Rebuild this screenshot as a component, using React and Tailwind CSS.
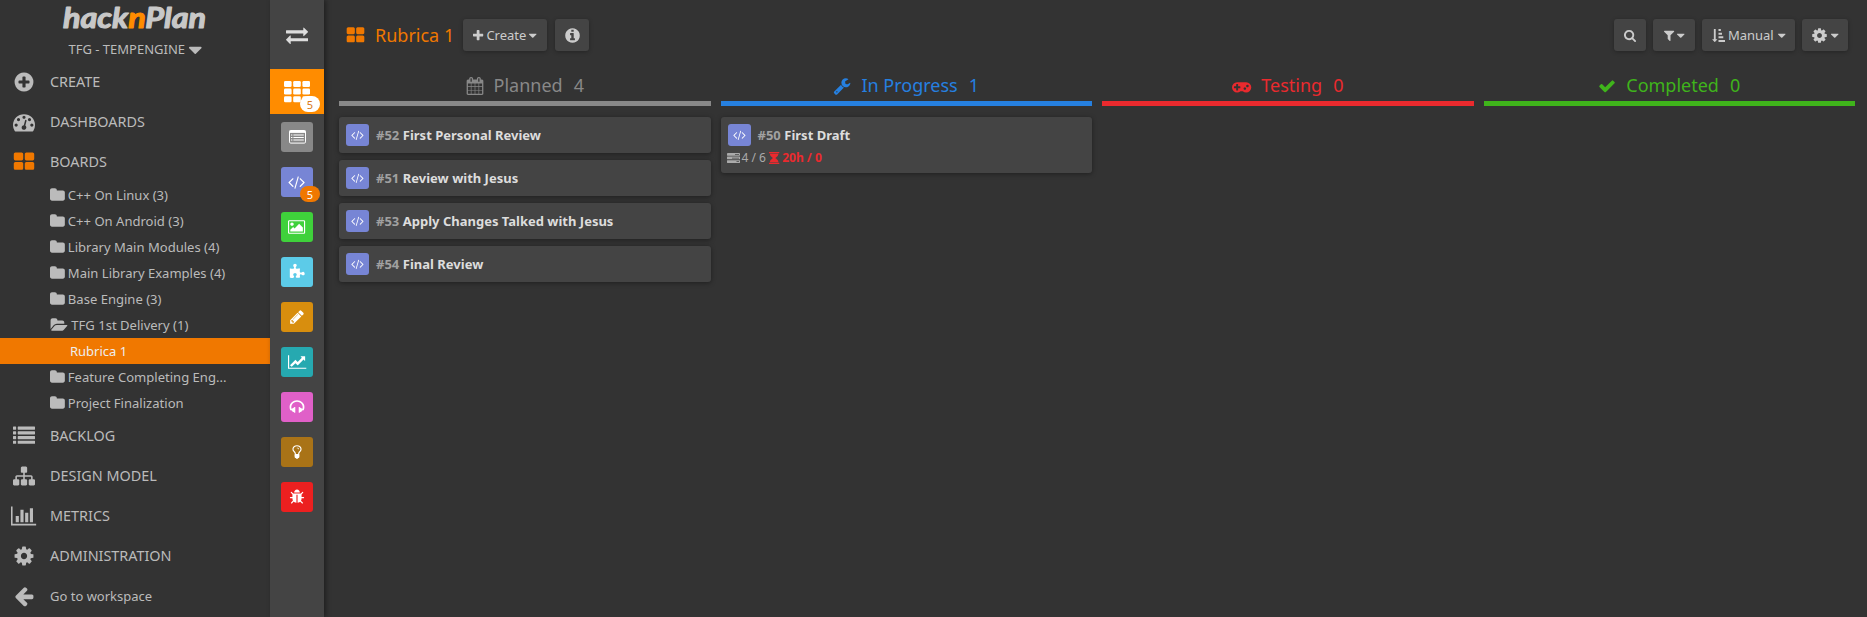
import React from "react";

const ICONS = {
  thLarge: "M832 1024v384q0 52-38 90t-90 38h-512q-52 0-90-38t-38-90v-384q0-52 38-90t90-38h512q52 0 90 38t38 90zm0-768v384q0 52-38 90t-90 38h-512q-52 0-90-38t-38-90v-384q0-52 38-90t90-38h512q52 0 90 38t38 90zm896 768v384q0 52-38 90t-90 38h-512q-52 0-90-38t-38-90v-384q0-52 38-90t90-38h512q52 0 90 38t38 90zm0-768v384q0 52-38 90t-90 38h-512q-52 0-90-38t-38-90v-384q0-52 38-90t90-38h512q52 0 90 38t38 90z",
  plusCircle: "M1344 960v-128q0-26-19-45t-45-19h-256v-256q0-26-19-45t-45-19h-128q-26 0-45 19t-19 45v256h-256q-26 0-45 19t-19 45v128q0 26 19 45t45 19h256v256q0 26 19 45t45 19h128q26 0 45-19t19-45v-256h256q26 0 45-19t19-45zm320-64q0 209-103 385.5t-279.5 279.5-385.5 103-385.5-103-279.5-279.5-103-385.5 103-385.5 279.5-279.5 385.5-103 385.5 103 279.5 279.5 103 385.5z",
  tachometer: "M384 1152q0-53-37.5-90.5t-90.5-37.5-90.5 37.5-37.5 90.5 37.5 90.5 90.5 37.5 90.5-37.5 37.5-90.5zm192-448q0-53-37.5-90.5t-90.5-37.5-90.5 37.5-37.5 90.5 37.5 90.5 90.5 37.5 90.5-37.5 37.5-90.5zm428 481l101-382q6-26-7.5-48.5t-38.5-29.5-48 6.5-30 39.5l-101 382q-60 5-107 43.5t-63 98.5q-20 77 20 146t117 89 146-20 89-117q16-60-6-117t-72-91zm660-33q0-53-37.5-90.5t-90.5-37.5-90.5 37.5-37.5 90.5 37.5 90.5 90.5 37.5 90.5-37.5 37.5-90.5zm-640-640q0-53-37.5-90.5t-90.5-37.5-90.5 37.5-37.5 90.5 37.5 90.5 90.5 37.5 90.5-37.5 37.5-90.5zm448 192q0-53-37.5-90.5t-90.5-37.5-90.5 37.5-37.5 90.5 37.5 90.5 90.5 37.5 90.5-37.5 37.5-90.5zm320 448q0 261-141 483-19 29-54 29h-1402q-35 0-54-29-141-221-141-483 0-182 71-348t191-286 286-191 348-71 348 71 286 191 191 286 71 348z",
  folder: "M1728 608v704q0 92-66 158t-158 66h-1216q-92 0-158-66t-66-158v-960q0-92 66-158t158-66h320q92 0 158 66t66 158v32h672q92 0 158 66t66 158z",
  folderOpen: "M1943 952q0 31-31 66l-336 396q-43 51-120.5 86.5t-143.5 35.5h-1088q-34 0-60.5-13t-26.5-43q0-31 31-66l336-396q43-51 120.5-86.5t143.5-35.5h1088q34 0 60.5 13t26.5 43zm-343-344v160h-832q-94 0-197 47.5t-164 119.5l-337 396-5 6q0-4-.5-12.5t-.5-12.5v-960q0-92 66-158t158-66h320q92 0 158 66t66 158v32h544q92 0 158 66t66 158z",
  caret: "M1408 704q0 26-19 45l-448 448q-19 19-45 19t-45-19l-448-448q-19-19-19-45t19-45 45-19h896q26 0 45 19t19 45z",
  sitemap: "M1792 1248v320q0 40-28 68t-68 28h-320q-40 0-68-28t-28-68v-320q0-40 28-68t68-28h96v-192h-512v192h96q40 0 68 28t28 68v320q0 40-28 68t-68 28h-320q-40 0-68-28t-28-68v-320q0-40 28-68t68-28h96v-192h-512v192h96q40 0 68 28t28 68v320q0 40-28 68t-68 28h-320q-40 0-68-28t-28-68v-320q0-40 28-68t68-28h96v-192q0-52 38-90t90-38h512v-192h-96q-40 0-68-28t-28-68v-320q0-40 28-68t68-28h320q40 0 68 28t28 68v320q0 40-28 68t-68 28h-96v192h512q52 0 90 38t38 90v192h96q40 0 68 28t28 68z",
  barChart: "M640 896v512h-256v-512h256zm384-512v1024h-256v-1024h256zm1024 1152v128h-2048v-1536h128v1408h1920zm-640-896v768h-256v-768h256zm384-384v1152h-256v-1152h256z",
  cog: "M1152 896q0-106-75-181t-181-75-181 75-75 181 75 181 181 75 181-75 75-181zm512-109v222q0 12-8 23t-20 13l-185 28q-19 54-39 91 35 50 107 138 10 12 10 25t-9 23q-27 37-99 108t-94 71q-12 0-26-9l-138-108q-44 23-91 38-16 136-29 186-7 28-36 28h-222q-14 0-24.5-8.5t-11.5-21.5l-28-184q-49-16-90-37l-141 107q-10 9-25 9-14 0-25-11-126-114-165-168-7-10-7-23 0-12 8-23 15-21 51-66.5t54-70.5q-27-50-41-99l-183-27q-13-2-21-12.5t-8-23.5v-222q0-12 8-23t19-13l186-28q14-46 39-92-40-57-107-138-10-12-10-24 0-10 9-23 26-36 98.5-107.5t94.5-71.5q13 0 26 10l138 107q44-23 91-38 16-136 29-186 7-28 36-28h222q14 0 24.5 8.5t11.5 21.5l28 184q49 16 90 37l142-107q9-9 24-9 13 0 25 10 129 119 165 170 7 8 7 22 0 12-8 23-15 21-51 66.5t-54 70.5q26 50 41 98l183 28q13 2 21 12.5t8 23.5z",
  arrowLeft: "M1664 896v128q0 53-32.5 90.5t-84.5 37.5h-704l293 294q38 36 38 90t-38 90l-75 76q-37 37-90 37-52 0-91-37l-651-652q-37-37-37-90 0-52 37-91l651-650q38-38 91-38 52 0 90 38l75 74q38 38 38 91t-38 91l-293 293h704q52 0 84.5 37.5t32.5 90.5z",
  exchange: "M1792 1184v192q0 13-9.5 22.5t-22.5 9.5h-1376v192q0 13-9.5 22.5t-22.5 9.5q-12 0-24-10l-319-320q-9-9-9-22 0-14 9-23l320-320q9-9 23-9 13 0 22.5 9.5t9.5 22.5v192h1376q13 0 22.5 9.5t9.5 22.5zm0-544q0 14-9 23l-320 320q-9 9-23 9-13 0-22.5-9.5t-9.5-22.5v-192h-1376q-13 0-22.5-9.5t-9.5-22.5v-192q0-13 9.5-22.5t22.5-9.5h1376v-192q0-14 9-23t23-9q12 0 24 10l319 319q9 9 9 23z",
  code: "M617 1399l-50 50q-10 10-23 10t-23-10l-466-466q-10-10-10-23t10-23l466-466q10-10 23-10t23 10l50 50q10 10 10 23t-10 23l-393 393 393 393q10 10 10 23t-10 23zm591-1067l-373 1291q-4 13-15.5 19.5t-23.5 2.5l-62-17q-13-4-19.5-15.5t-2.5-24.5l373-1291q4-13 15.5-19.5t23.5-2.5l62 17q13 4 19.5 15.5t2.5 24.5zm657 651l-466 466q-10 10-23 10t-23-10l-50-50q-10-10-10-23t10-23l393-393-393-393q-10-10-10-23t10-23l50-50q10-10 23-10t23 10l466 466q10 10 10 23t-10 23z",
  image: "M576 576q0 80-56 136t-136 56-136-56-56-136 56-136 136-56 136 56 56 136zm1024 384v448h-1408v-192l320-320 160 160 512-512zm96-704h-1600q-13 0-22.5 9.5t-9.5 22.5v1216q0 13 9.5 22.5t22.5 9.5h1600q13 0 22.5-9.5t9.5-22.5v-1216q0-13-9.5-22.5t-22.5-9.5zm160 32v1216q0 66-47 113t-113 47h-1600q-66 0-113-47t-47-113v-1216q0-66 47-113t113-47h1600q66 0 113 47t47 113z",
  puzzle: "M1755 1083q0 81-44.5 135t-123.5 54q-41 0-77.5-17.5t-59-38-56.5-38-71-17.5q-110 0-110 124 0 39 16 115t15 115v5q-22 0-33 1-34 3-97.5 11.5t-115.5 13.5-98 5q-61 0-103-26.5t-42-83.5q0-37 17.5-71t38-56.5 38-59 17.5-77.5q0-79-54-123.5t-135-44.5q-84 0-143 45.5t-59 127.5q0 43 15 83t33.5 64.5 33.5 53 15 50.5q0 45-46 89-37 35-117 35-95 0-245-24-9-2-27.5-4t-27.5-4l-13-2q-1 0-3-1-2 0-2-1v-1024q2 1 17.5 3.5t34 5 21.5 3.5q150 24 245 24 80 0 117-35 46-44 46-89 0-22-15-50.5t-33.5-53-33.5-64.5-15-83q0-82 59-127.5t144-45.5q80 0 134 44.5t54 123.5q0 41-17.5 77.5t-38 59-38 56.5-17.5 71q0 57 42 83.5t103 26.5q64 0 180-15t163-17v2q-1 2-3.5 17.5t-5 34-3.5 21.5q-24 150-24 245 0 80 35 117 44 46 89 46 22 0 50.5-15t53-33.5 64.5-33.5 83-15q82 0 127.5 59t45.5 143z",
  pencil: "M491 1536l91-91-235-235-91 91v107h128v128h107zm523-928q0-22-22-22-10 0-17 7l-542 542q-7 7-7 17 0 22 22 22 10 0 17-7l542-542q7-7 7-17zm-54-192l416 416-832 832h-416v-416zm683 96q0 53-37 90l-166 166-416-416 166-165q36-38 90-38 53 0 91 38l235 234q37 39 37 91z",
  lineChart: "M2048 1536v128h-2048v-1536h128v1408h1920zm-128-1248v435q0 21-19.5 29.5t-35.5-7.5l-121-121-633 633q-10 10-23 10t-23-10l-233-233-416 416-192-192 585-585q10-10 23-10t23 10l233 233 464-464-121-121q-16-16-7.5-35.5t29.5-19.5h435q14 0 23 9t9 23z",
  headphones: "M1728 886q0 166-60 314l-20 49-185 33q-22 83-90.5 136.5t-156.5 53.5v32q0 14-9 23t-23 9h-64q-14 0-23-9t-9-23v-576q0-14 9-23t23-9h64q14 0 23 9t9 23v32q71 0 130 35.5t93 95.5l68-12q29-95 29-193 0-148-88-279t-236.5-209-315.5-78-315.5 78-236.5 209-88 279q0 98 29 193l68 12q34-60 93-95.5t130-35.5v-32q0-14 9-23t23-9h64q14 0 23 9t9 23v576q0 14-9 23t-23 9h-64q-14 0-23-9t-9-23v-32q-88 0-156.5-53.5t-90.5-136.5l-185-33-20-49q-60-148-60-314 0-151 67-291t179-242.5 266-163.5 320-61 320 61 266 163.5 179 242.5 67 291z",
  bulb: "M1120 576q0 13-9.5 22.5t-22.5 9.5-22.5-9.5-9.5-22.5q0-46-54-71t-106-25q-13 0-22.5-9.5t-9.5-22.5 9.5-22.5 22.5-9.5q50 0 99.5 16t87 54 37.5 90zm160 0q0-72-34.5-134t-90-101.5-123-62-136.5-22.5-136.5 22.5-123 62-90 101.5-34.5 134q0 101 68 180 10 11 30.5 33t30.5 33q128 153 141 298h228q13-145 141-298 10-11 30.5-33t30.5-33q68-79 68-180zm128 0q0 155-103 268-45 49-74.5 87t-59.5 95.5-34 107.5q47 28 47 82 0 37-25 64 25 27 25 64 0 52-45 81 13 23 13 47 0 46-31.5 71t-77.5 25q-20 44-60 70t-87 26-87-26-60-70q-46 0-77.5-25t-31.5-71q0-24 13-47-45-29-45-81 0-37 25-64-25-27-25-64 0-54 47-82-4-50-34-107.5t-59.5-95.5-74.5-87q-103-113-103-268 0-99 44.5-184.5t117-142 164-89 186.5-32.5 186.5 32.5 164 89 117 142 44.5 184.5z",
  bug: "M1696 960q0 26-19 45t-45 19h-224q0 171-67 290l208 209q19 19 19 45t-19 45q-18 19-45 19t-45-19l-198-197q-5 5-15 13t-42 28.5-65 36.5-82 29-97 13v-896h-128v896q-51 0-101.5-13.5t-87-33-66-39-43.5-32.5l-15-14-183 207q-20 21-48 21-24 0-43-16-19-18-20.5-44.5t15.5-46.5l202-227q-58-114-58-274h-224q-26 0-45-19t-19-45 19-45 45-19h224v-294l-173-173q-19-19-19-45t19-45 45-19 45 19l173 173h844l173-173q19-19 45-19t45 19 19 45-19 45l-173 173v294h224q26 0 45 19t19 45zm-480-576h-640q0-133 93.5-226.5t226.5-93.5 226.5 93.5 93.5 226.5z",
  plus: "M1600 736v192q0 40-28 68t-68 28h-416v416q0 40-28 68t-68 28h-192q-40 0-68-28t-28-68v-416h-416q-40 0-68-28t-28-68v-192q0-40 28-68t68-28h416v-416q0-40 28-68t68-28h192q40 0 68 28t28 68v416h416q40 0 68 28t28 68z",
  info: "M1152 1376v-160q0-14-9-23t-23-9h-96v-512q0-14-9-23t-23-9h-320q-14 0-23 9t-9 23v160q0 14 9 23t23 9h96v320h-96q-14 0-23 9t-9 23v160q0 14 9 23t23 9h448q14 0 23-9t9-23zm-128-896v-160q0-14-9-23t-23-9h-192q-14 0-23 9t-9 23v160q0 14 9 23t23 9h192q14 0 23-9t9-23zm640 416q0 209-103 385.5t-279.5 279.5-385.5 103-385.5-103-279.5-279.5-103-385.5 103-385.5 279.5-279.5 385.5-103 385.5 103 279.5 279.5 103 385.5z",
  calendar: "M192 1664h288v-288h-288v288zm352 0h320v-288h-320v288zm-352-352h288v-320h-288v320zm352 0h320v-320h-320v320zm-352-384h288v-288h-288v288zm736 736h320v-288h-320v288zm-384-736h320v-288h-320v288zm768 736h288v-288h-288v288zm-384-352h320v-320h-320v320zm-352-864v-288q0-13-9.5-22.5t-22.5-9.5h-64q-13 0-22.5 9.5t-9.5 22.5v288q0 13 9.5 22.5t22.5 9.5h64q13 0 22.5-9.5t9.5-22.5zm736 864h288v-320h-288v320zm-384-384h320v-288h-320v288zm384 0h288v-288h-288v288zm32-480v-288q0-13-9.5-22.5t-22.5-9.5h-64q-13 0-22.5 9.5t-9.5 22.5v288q0 13 9.5 22.5t22.5 9.5h64q13 0 22.5-9.5t9.5-22.5zm384-64v1280q0 52-38 90t-90 38h-1408q-52 0-90-38t-38-90v-1280q0-52 38-90t90-38h128v-96q0-66 47-113t113-47h64q66 0 113 47t47 113v96h384v-96q0-66 47-113t113-47h64q66 0 113 47t47 113v96h128q52 0 90 38t38 90z",
  wrench: "M448 1472q0-26-19-45t-45-19-45 19-19 45 19 45 45 19 45-19 19-45zm644-420l-682 682q-37 37-90 37-52 0-91-37l-106-108q-38-36-38-90 0-53 38-91l681-681q39 98 114.5 173.5t173.5 114.5zm634-435q0 39-23 106-47 134-164.5 217.5t-258.5 83.5q-185 0-316.5-131.5t-131.5-316.5 131.5-316.5 316.5-131.5q58 0 121.5 16.5t107.5 46.5q16 11 16 28t-16 28l-293 169v224l193 107q5-3 79-48.5t135.5-81 70.5-35.5q15 0 23.5 10t8.5 25z",
  gamepad: "M832 1088v-128q0-14-9-23t-23-9h-192v-192q0-14-9-23t-23-9h-128q-14 0-23 9t-9 23v192h-192q-14 0-23 9t-9 23v128q0 14 9 23t23 9h192v192q0 14 9 23t23 9h128q14 0 23-9t9-23v-192h192q14 0 23-9t9-23zm576 64q0-53-37.5-90.5t-90.5-37.5-90.5 37.5-37.5 90.5 37.5 90.5 90.5 37.5 90.5-37.5 37.5-90.5zm256-256q0-53-37.5-90.5t-90.5-37.5-90.5 37.5-37.5 90.5 37.5 90.5 90.5 37.5 90.5-37.5 37.5-90.5zm256 128q0 212-150 362t-362 150q-192 0-338-128h-220q-146 128-338 128-212 0-362-150t-150-362 150-362 362-150h896q212 0 362 150t150 362z",
  check: "M1671 566q0 40-28 68l-724 724-136 136q-28 28-68 28t-68-28l-136-136-362-362q-28-28-28-68t28-68l136-136q28-28 68-28t68 28l294 295 656-657q28-28 68-28t68 28l136 136q28 28 28 68z",
  search: "M1216 832q0-185-131.5-316.5t-316.5-131.5-316.5 131.5-131.5 316.5 131.5 316.5 316.5 131.5 316.5-131.5 131.5-316.5zm512 832q0 52-38 90t-90 38q-54 0-90-38l-343-342q-179 124-399 124-143 0-273.5-55.5t-225-150-150-225-55.5-273.5 55.5-273.5 150-225 225-150 273.5-55.5 273.5 55.5 225 150 150 225 55.5 273.5q0 220-124 399l343 343q37 37 37 90z",
  filter: "M1595 295q17 41-14 70l-493 493v742q0 42-39 59-13 5-25 5-27 0-45-19l-256-256q-19-19-19-45v-486l-493-493q-31-29-14-70 17-39 59-39h1280q42 0 59 39z",
  sortAsc: "M736 1440q0 12-10 24l-319 319q-10 9-23 9-12 0-23-9l-320-320q-15-16-7-35 8-20 30-20h192v-1376q0-14 9-23t23-9h192q14 0 23 9t9 23v1376h192q14 0 23 9t9 23zm160-1440h320v276h-320zm0 500h480v276h-480zm0 500h660v276h-660zm0 500h896v276h-896z",
  list: "M32 1280h192q32 0 32 32v192q0 32-32 32h-192q-32 0-32-32v-192q0-32 32-32zm0-384h192q32 0 32 32v192q0 32-32 32h-192q-32 0-32-32v-192q0-32 32-32zm0-384h192q32 0 32 32v192q0 32-32 32h-192q-32 0-32-32v-192q0-32 32-32zm0-384h192q32 0 32 32v192q0 32-32 32h-192q-32 0-32-32v-192q0-32 32-32zm384 1152h1344q32 0 32 32v192q0 32-32 32h-1344q-32 0-32-32v-192q0-32 32-32zm0-384h1344q32 0 32 32v192q0 32-32 32h-1344q-32 0-32-32v-192q0-32 32-32zm0-384h1344q32 0 32 32v192q0 32-32 32h-1344q-32 0-32-32v-192q0-32 32-32zm0-384h1344q32 0 32 32v192q0 32-32 32h-1344q-32 0-32-32v-192q0-32 32-32z",
  hourglass: "M1632 1600q14 0 23 9t9 23v128q0 14-9 23t-23 9h-1472q-14 0-23-9t-9-23v-128q0-14 9-23t23-9h1472zm-1374-64q3-55 16-107t30-95 46-87 53.5-76 64.5-69.5 66-60 70.5-55 66.5-47.5 65-43q-43-28-65-43t-66.5-47.5-70.5-55-66-60-64.5-69.5-53.5-76-46-87-30-95-16-107h1276q-3 55-16 107t-30 95-46 87-53.5 76-64.5 69.5-66 60-70.5 55-66.5 47.5-65 43q43 28 65 43t66.5 47.5 70.5 55 66 60 64.5 69.5 53.5 76 46 87 30 95 16 107h-1276zm1374-1536q14 0 23 9t9 23v128q0 14-9 23t-23 9h-1472q-14 0-23-9t-9-23v-128q0-14 9-23t23-9h1472z",
};

const VIEW = {
  folderOpen: [0, 2048],
  barChart: [0, 2048],
  lineChart: [0, 2048],
  code: [0, 1920],
  gamepad: [0, 1920],
  image: [-64, 1920],
  caret: [384, 1024],
  search: [64, 1664],
  folder: [64, 1664],
  plus: [192, 1408],
  filter: [192, 1408],
  hourglass: [128, 1536],
};

// Icons are drawn on a 1792-unit em; `size` is the em height in pixels.
function Icon({ name, size, className = "" }) {
  const [x, w] = VIEW[name] || [0, 1792];
  return (
    <svg
      width={(size * w) / 1792}
      height={size}
      viewBox={`${x} 0 ${w} 1792`}
      fill="currentColor"
      className={`shrink-0 overflow-visible ${className}`}
    >
      <path d={ICONS[name]} />
    </svg>
  );
}

function GridIcon() {
  return (
    <svg width="26" height="22" viewBox="0 0 26 22" fill="currentColor">
      {[0, 7.6, 15.2].map((y) =>
        [0, 9.2, 18.4].map((x) => <rect key={x + "-" + y} x={x} y={y} width="7.6" height="6" rx="1.3" />)
      )}
    </svg>
  );
}

function ListAltIcon() {
  return (
    <svg width="17" height="14" viewBox="0 0 17 14" fill="none" stroke="currentColor">
      <rect x="0.5" y="0.5" width="16" height="12.6" rx="1.2" />
      <path d="M0.5 1.7h16" strokeWidth="2.4" />
      <path d="M2 5h1.4M4.4 5h10.4M2 7.5h1.4M4.4 7.5h10.4M2 10h1.4M4.4 10h10.4" strokeWidth="1.2" />
    </svg>
  );
}

function TasksIcon() {
  return (
    <svg width="13" height="10" viewBox="0 0 13 10" fill="currentColor">
      <rect width="13" height="2.7" rx="0.4" />
      <rect y="3.6" width="13" height="2.7" rx="0.4" />
      <rect y="7.2" width="13" height="2.7" rx="0.4" />
      <path d="M8 1.1h4v0.7h-4zM5 4.7h7v0.7h-7zM9.5 8.3h2.5v0.7h-2.5z" fill="#444" />
    </svg>
  );
}

function MenuItem({ icon, label, iconClass = "", textClass = "text-[14.4px]" }) {
  return (
    <div className="flex h-10 items-center">
      <div className={`flex w-[47px] shrink-0 justify-center ${iconClass}`}>
        <Icon name={icon} size={22} />
      </div>
      <span className={`ml-[3px] ${textClass}`}>{label}</span>
    </div>
  );
}

const FOLDERS_TOP = [
  "C++ On Linux (3)",
  "C++ On Android (3)",
  "Library Main Modules (4)",
  "Main Library Examples (4)",
  "Base Engine (3)",
];

function FolderRow({ label, open }) {
  return (
    <div className="flex h-[26px] items-center pl-[50px] text-[13.05px]">
      <Icon name={open ? "folderOpen" : "folder"} size={16} />
      <span className="ml-[3px] pt-px">{label}</span>
    </div>
  );
}

function Sidebar() {
  return (
    <aside className="flex w-[270px] shrink-0 flex-col text-[#bbb]">
      <div className="flex h-[62px] flex-col items-center">
        <svg width="156" height="38" className="shrink-0" fill="#c8c8c8" stroke="#c8c8c8" strokeWidth="1.1" strokeLinejoin="round">
          <text x="6" y="28" textLength="143" lengthAdjust="spacingAndGlyphs" className="font-['Lato'] text-[28px] font-bold italic">
            hack<tspan fill="#ff8c00" stroke="#ff8c00">n</tspan>Plan
          </text>
        </svg>
        <div className="flex h-6 items-center gap-1 text-[13px]">
          <span>TFG - TEMPENGINE</span>
          <Icon name="caret" size={22} />
        </div>
      </div>
      <MenuItem icon="plusCircle" label="CREATE" />
      <MenuItem icon="tachometer" label="DASHBOARDS" />
      <MenuItem icon="thLarge" label="BOARDS" iconClass="text-[#f07800]" />
      {FOLDERS_TOP.map((f) => (
        <FolderRow key={f} label={f} />
      ))}
      <FolderRow label="TFG 1st Delivery (1)" open />
      <div className="flex h-[26px] items-center bg-[#f07800] pt-px pl-[70px] text-[13px] text-[#eee]">Rubrica 1</div>
      <FolderRow label="Feature Completing Eng..." />
      <FolderRow label="Project Finalization" />
      <MenuItem icon="list" label="BACKLOG" />
      <MenuItem icon="sitemap" label="DESIGN MODEL" />
      <MenuItem icon="barChart" label="METRICS" />
      <MenuItem icon="cog" label="ADMINISTRATION" />
      <MenuItem icon="arrowLeft" label="Go to workspace" textClass="text-[13px] pt-px" />
    </aside>
  );
}

function Badge({ className }) {
  return (
    <span className={`absolute flex h-4 w-5 items-center justify-center rounded-[8px] text-[11px] leading-none ${className}`}>
      5
    </span>
  );
}

const CATEGORIES = [
  ["listAlt", "bg-[#888]"],
  ["code", "bg-[#7785d5]"],
  ["image", "bg-[#3fd13b]"],
  ["puzzle", "bg-[#5ccbe8]"],
  ["pencil", "bg-[#d88e0e]"],
  ["lineChart", "bg-[#26a9b0]"],
  ["headphones", "bg-[#e060c8]"],
  ["bulb", "bg-[#a97317]"],
  ["bug", "bg-[#ec2020]"],
];

function CategoryStrip() {
  return (
    <nav className="z-10 flex w-[54px] shrink-0 flex-col items-center bg-[#444] shadow-[2px_0_5px_rgba(0,0,0,0.4)]">
      <div className="flex h-[69px] items-center text-[#ddd]">
        <Icon name="exchange" size={22} />
      </div>
      <div className="relative flex h-[45px] w-full justify-center bg-[#ff8c00] pt-3 text-white">
        <GridIcon />
        <Badge className="top-[27px] left-[30px] bg-white text-[#d97a20]" />
      </div>
      <div className="mt-2 flex flex-col gap-[15px] text-white">
        {CATEGORIES.map(([name, bg]) => (
          <div key={name} className={`relative flex h-[30px] w-8 items-center justify-center rounded-[3px] ${bg}`}>
            {name === "listAlt" ? <ListAltIcon /> : <Icon name={name} size={16} />}
            {name === "code" && <Badge className="top-[19px] left-[19px] bg-[#f07800] text-white" />}
          </div>
        ))}
      </div>
    </nav>
  );
}

function Button({ className, children }) {
  return (
    <button
      className={`flex h-8 items-center justify-center rounded-[3px] bg-[#444] text-[13px] text-[#ccc] shadow-[0_1px_4px_rgba(0,0,0,0.3)] ${className}`}
    >
      {children}
    </button>
  );
}

function Toolbar() {
  return (
    <header className="flex h-[51px] items-end pr-[19px] pl-[22px]">
      <div className="flex h-8 items-center text-[18px] text-[#f07800]">
        <Icon name="thLarge" size={19} />
        <span className="ml-2.5 w-[88px]">Rubrica 1</span>
      </div>
      <Button className="w-[84px]">
        <Icon name="plus" size={13} />
        <span className="mx-[3px] pt-px">Create</span>
        <Icon name="caret" size={13} />
      </Button>
      <Button className="ml-2 w-[34px]">
        <Icon name="info" size={17} />
      </Button>
      <div className="ml-auto flex gap-[7px]">
        <Button className="w-8">
          <Icon name="search" size={13} />
        </Button>
        <Button className="w-[42px] gap-[3px]">
          <Icon name="filter" size={13} />
          <Icon name="caret" size={13} />
        </Button>
        <Button className="w-[93px]">
          <Icon name="sortAsc" size={13} />
          <span className="mr-1 ml-[3px] pt-px">Manual</span>
          <Icon name="caret" size={13} />
        </Button>
        <Button className="w-[46px] gap-[3px]">
          <Icon name="cog" size={17} />
          <Icon name="caret" size={13} />
        </Button>
      </div>
    </header>
  );
}

const COLUMNS = [
  {
    name: "Planned",
    icon: "calendar",
    text: "text-[#888]",
    bar: "bg-[#888]",
    count: 4,
    cards: [
      { id: "#52", title: "First Personal Review" },
      { id: "#51", title: "Review with Jesus" },
      { id: "#53", title: "Apply Changes Talked with Jesus" },
      { id: "#54", title: "Final Review" },
    ],
  },
  {
    name: "In Progress",
    icon: "wrench",
    text: "text-[#2680e0]",
    bar: "bg-[#2680e0]",
    count: 1,
    cards: [{ id: "#50", title: "First Draft", tasks: "4 / 6", time: "20h / 0" }],
  },
  { name: "Testing", icon: "gamepad", text: "text-[#ea2a2e]", bar: "bg-[#ea2a2e]", count: 0, cards: [] },
  { name: "Completed", icon: "check", text: "text-[#3fb41b]", bar: "bg-[#3fb41b]", count: 0, cards: [] },
];

function Card({ card }) {
  return (
    <div className="rounded-[3px] bg-[#444] px-[7px] py-[7px] shadow-[0_1px_5px_rgba(0,0,0,0.4)]">
      <div className="flex h-[22px] items-center text-[13px] font-bold">
        <div className="flex h-[22px] w-[23px] items-center justify-center rounded-[3px] bg-[#7785d5] text-white">
          <Icon name="code" size={12} />
        </div>
        <span className="ml-[7px] pt-0.5 text-[#a0a0a0]">{card.id}</span>
        <span className="ml-[3.5px] pt-0.5 text-[#ddd]">{card.title}</span>
      </div>
      {card.tasks && (
        <div className="-ml-px mt-[3px] flex h-[17px] items-center text-[12px] text-[#aaa]">
          <TasksIcon />
          <span className="ml-0.5 pt-px">{card.tasks}</span>
          <span className="ml-[3px] flex items-center gap-[3px] font-bold text-[#ea2a2e]">
            <Icon name="hourglass" size={12} />
            <span className="pt-px">{card.time}</span>
          </span>
        </div>
      )}
    </div>
  );
}

export default function App() {
  return (
    <div className="flex h-[617px] w-full overflow-hidden bg-[#333] font-['Noto_Sans',sans-serif]">
      <Sidebar />
      <CategoryStrip />
      <main className="flex min-w-0 flex-1 flex-col">
        <Toolbar />
        <div className="mt-5 grid grid-cols-4 gap-x-2.5 pr-3 pl-[15px]">
          {COLUMNS.map((c) => (
            <section key={c.name}>
              <div className={`flex h-[30px] items-center justify-center text-[18px] ${c.text}`}>
                <Icon name={c.icon} size={18} />
                <span className="ml-2.5 pb-0.5">{c.name}</span>
                <span className="ml-[11px] pb-0.5">{c.count}</span>
              </div>
              <div className={`h-[5px] ${c.bar}`} />
              <div className="mt-[11px] flex flex-col gap-[7px]">
                {c.cards.map((card) => (
                  <Card key={card.id} card={card} />
                ))}
              </div>
            </section>
          ))}
        </div>
      </main>
    </div>
  );
}
